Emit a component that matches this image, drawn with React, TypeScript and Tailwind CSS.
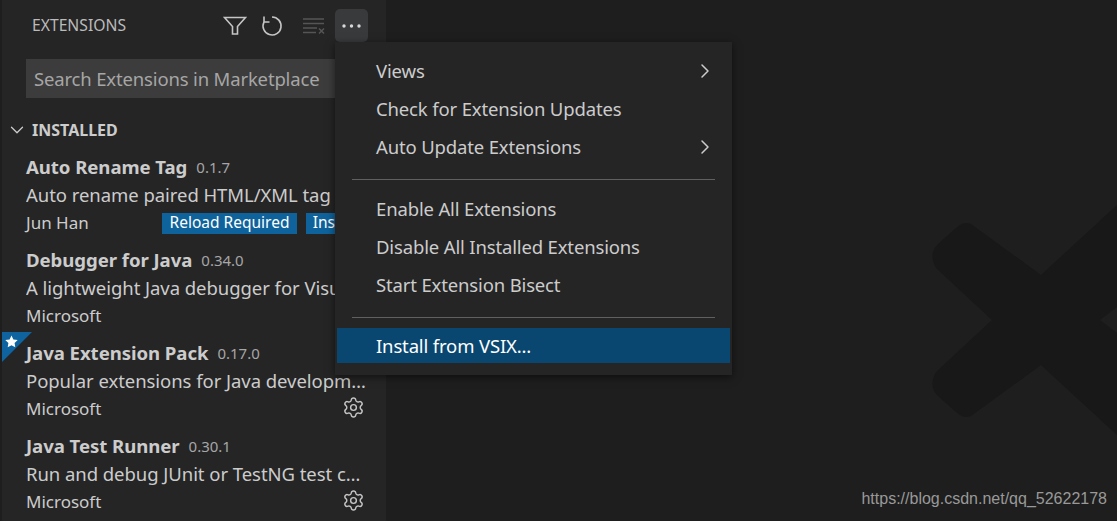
import { ChevronDown, ChevronRight, Settings } from "lucide-react";

const ui = "font-['Noto_Sans',sans-serif]";

const extensions = [
  { name: "Auto Rename Tag", version: "0.1.7", desc: "Auto rename paired HTML/XML tag", author: "Jun Han", reload: true },
  { name: "Debugger for Java", version: "0.34.0", desc: "A lightweight Java debugger for Visual Studio Code", author: "Microsoft", gear: true },
  { name: "Java Extension Pack", version: "0.17.0", desc: "Popular extensions for Java development and more", author: "Microsoft", gear: true, star: true },
  { name: "Java Test Runner", version: "0.30.1", desc: "Run and debug JUnit or TestNG test cases in the editor", author: "Microsoft", gear: true },
];

function HeaderActions() {
  return (
    <div className="flex items-center">
      <button className="flex h-[33px] w-[33px] items-center justify-center">
        <svg width="24" height="20" viewBox="0 0 24 20" fill="none" stroke="#c5c5c5" strokeWidth="1.6">
          <path d="M1.5 1.5h21l-8 9v7.5h-5v-7.5z" />
        </svg>
      </button>
      <button className="ml-[5.5px] flex h-[33px] w-[33px] items-center justify-center">
        <svg className="mr-[3px]" width="22" height="22" viewBox="0 0 22 22" fill="none" stroke="#c5c5c5" strokeWidth="1.6">
          <path d="M11 2a9 9 0 1 1-8 5" />
          <path d="M3 1.5v5.5h5.5" />
        </svg>
      </button>
      <button className="ml-[7px] flex h-[33px] w-[33px] items-center justify-center">
        <svg width="22" height="16" viewBox="0 0 22 16" fill="none" stroke="#555555" strokeWidth="1.5">
          <path d="M0 1h21M0 5.5h21M0 10h14M0 14.5h13M16 10.5l5 5M21 10.5l-5 5" />
        </svg>
      </button>
      <button className="ml-[5px] flex h-[33px] w-[33px] items-center justify-center rounded-[5px] bg-[#383a3b]">
        <svg width="20" height="4" viewBox="0 0 20 4" fill="#d8d8d8">
          <circle cx="2" cy="2" r="1.7" />
          <circle cx="9.5" cy="2" r="1.7" />
          <circle cx="17" cy="2" r="1.7" />
        </svg>
      </button>
    </div>
  );
}

function ExtensionRow({ ext }: { ext: (typeof extensions)[number] }) {
  return (
    <div className="relative h-[93px] pl-[24px] pr-[22px] py-2">
      {ext.star && (
        <div className="absolute left-0 top-[1px] h-[30px] w-[30px]">
          <svg width="30" height="30" viewBox="0 0 30 30">
            <path d="M0 0h30L0 30z" fill="#0f639f" />
            <path d="M9.5 3.5l1.9 3.9 4.3.6-3.1 3 .7 4.3-3.8-2-3.8 2 .7-4.3-3.1-3 4.3-.6z" fill="#ffffff" />
          </svg>
        </div>
      )}
      <div className="flex h-[28px] items-center">
        <span className="text-[18.6px] font-bold tracking-[-0.06px] text-[#cccccc]">{ext.name}</span>
        <span className="ml-[9px] text-[15px] text-[#a6a6a6]">{ext.version}</span>
      </div>
      <div className="-mr-[2px] h-[28px] truncate text-[18.5px] leading-[28px] tracking-[-0.05px] text-[#cccccc]">{ext.desc}</div>
      <div className="flex h-[28px] items-center">
        <span className="text-[17px] text-[#cccccc]">{ext.author}</span>
        {ext.reload && (
          <div className="ml-auto flex gap-[9px]">
            <span className="flex h-[21px] w-[135px] items-center justify-center bg-[#0e639c] text-[15.5px] text-white">Reload Required</span>
            <span className="flex h-[21px] w-[58px] items-center justify-center bg-[#0e639c] text-[15.5px] text-white">Install</span>
          </div>
        )}
        {ext.gear && <Settings className="-mr-[1px] mb-[4px] ml-auto" size={23} strokeWidth={1.5} color="#c5c5c5" />}
      </div>
    </div>
  );
}

function MenuItem({ label, submenu }: { label: string; submenu?: boolean }) {
  return (
    <div className="flex h-[38px] items-center pl-[39px] pr-[13px] text-[18.5px] tracking-[-0.15px] text-[#cccccc]">
      <span>{label}</span>
      {submenu && <ChevronRight className="ml-auto" size={24} strokeWidth={1.5} color="#cccccc" />}
    </div>
  );
}

function ContextMenu() {
  return (
    <div className="absolute left-[335px] top-[42px] h-[333px] w-[397px] bg-[#252526] px-[2px] pt-[10px] shadow-[0_2px_8px_rgba(0,0,0,0.55)]">
      <MenuItem label="Views" submenu />
      <MenuItem label="Check for Extension Updates" />
      <MenuItem label="Auto Update Extensions" submenu />
      <div className="mx-[15px] mb-[10px] mt-[13px] h-px bg-[#606060]" />
      <MenuItem label="Enable All Extensions" />
      <MenuItem label="Disable All Installed Extensions" />
      <MenuItem label="Start Extension Bisect" />
      <div className="mx-[15px] mb-[10px] mt-[13px] h-px bg-[#606060]" />
      <div className="flex h-[35px] items-center bg-[#094771] pl-[39px] text-[18.5px] tracking-[-0.15px] text-white">Install from VSIX...</div>
    </div>
  );
}

export default function App() {
  return (
    <div className={`${ui} relative flex h-[521px] w-[1117px] overflow-hidden bg-[#1e1e1e]`}>
      <div className="w-[2px] bg-[#1e1e1e]" />
      <aside className="w-[384px] overflow-hidden bg-[#252526]">
        <div className="flex h-[51px] items-center justify-between pb-[1px] pl-[30px] pr-[18px] pt-[1px]">
          <span className="text-[15.7px] text-[#bbbbbb]">EXTENSIONS</span>
          <HeaderActions />
        </div>
        <div className="ml-[24px] mt-[8px] flex h-[39px] w-[340px] items-center bg-[#3c3c3c] pl-[8px] text-[18.5px] tracking-[-0.16px] text-[#a6a6a6]">
          Search Extensions in Marketplace
        </div>
        <div className="mb-[1px] mt-[17px] flex h-[29px] items-center">
          <ChevronDown className="ml-[4px]" size={22} strokeWidth={1.4} color="#cccccc" />
          <span className="ml-[4px] text-[16px] font-bold text-[#cccccc]">INSTALLED</span>
        </div>
        {extensions.map((ext) => (
          <ExtensionRow key={ext.name} ext={ext} />
        ))}
      </aside>
      <main className="relative flex-1">
        {/* watermark logo, mostly cropped by the window */}
        <svg className="absolute right-0 top-[200px]" width="187" height="321" viewBox="930 200 187 321" fill="#181818">
          <path d="M1117 205L1041 275L971 224Q964 221 957 227L938 244Q928 254 936 268L992 320L936 372Q928 386 938 396L957 413Q964 419 971 416L1041 365L1117 435V333L1100 320L1117 307Z" />
        </svg>
        <span className="absolute bottom-[10px] right-[10px] font-['Liberation_Sans',sans-serif] text-[16px] text-[#999999]">
          https://blog.csdn.net/qq_52622178
        </span>
      </main>
      <ContextMenu />
    </div>
  );
}
